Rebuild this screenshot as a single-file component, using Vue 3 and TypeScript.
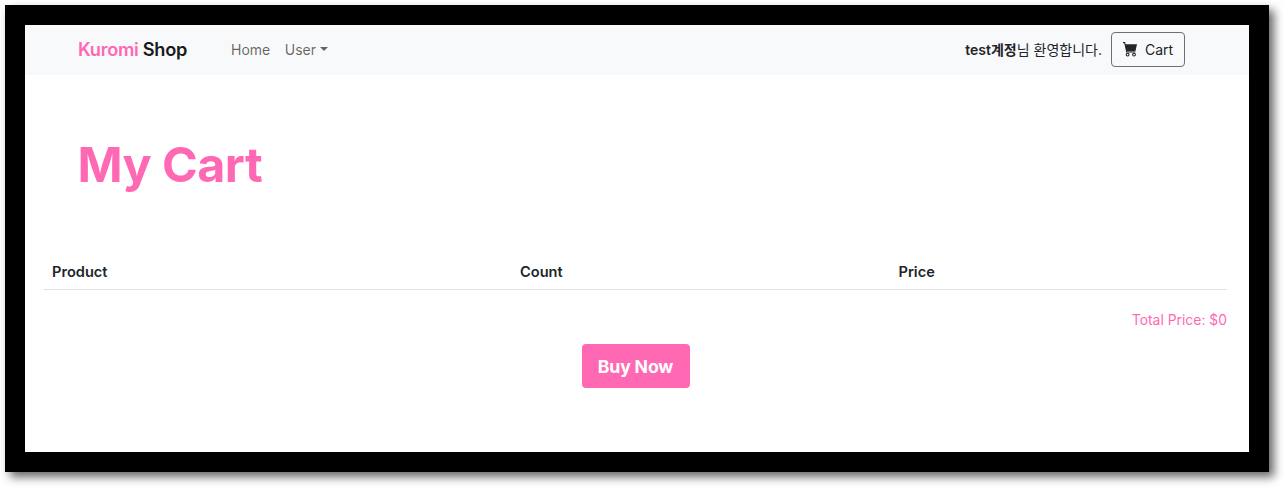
<script setup lang="ts">
const links = ['Home']
const columns = [
  { label: 'Product', width: '468px' },
  { label: 'Count', width: '378.5px' },
  { label: 'Price', width: 'auto' },
]
const total = 0
</script>

<template>
  <div class="page">
    <div class="frame">
      <nav class="navbar">
        <a class="brand"><span class="pink">Kuromi</span> Shop</a>
        <ul class="nav">
          <li v-for="link in links" :key="link"><a>{{ link }}</a></li>
          <li><a class="dropdown">User<i class="caret"></i></a></li>
        </ul>
        <div class="right">
          <span class="welcome"><b>test계정</b>님 환영합니다.</span>
          <button class="cart-btn">
            <svg class="cart-icon" viewBox="0 0 14 15" width="14" height="15">
              <path d="M0 .6h1.7l2 9.4h8.6" fill="none" stroke="currentColor" stroke-width="1.1" />
              <path d="M2.2 2.2H14l-1.6 7H3.6z" fill="currentColor" />
              <circle cx="4.6" cy="12.6" r="1.4" fill="none" stroke="currentColor" stroke-width="1.1" />
              <circle cx="11" cy="12.6" r="1.4" fill="none" stroke="currentColor" stroke-width="1.1" />
            </svg>
            Cart
          </button>
        </div>
      </nav>

      <main class="content">
        <h1 class="title">My Cart</h1>
        <table class="cart-table">
          <thead>
            <tr>
              <th v-for="col in columns" :key="col.label" :style="{ width: col.width }">{{ col.label }}</th>
            </tr>
          </thead>
        </table>
        <p class="total">Total Price: ${{ total }}</p>
        <div class="actions">
          <button class="buy-btn">Buy Now</button>
        </div>
      </main>
    </div>
  </div>
</template>

<style>
html {
  background: #fff;
}

body {
  margin: 0;
}
</style>

<style scoped>
.page {
  box-sizing: border-box;
  width: 1284px;
  height: 488px;
  padding: 5px 0 0 5px;
  overflow: hidden;
}

.frame {
  box-sizing: border-box;
  width: 1264px;
  height: 467px;
  border: 20px solid #000;
  background: #fff;
  box-shadow: 5px 5px 9px rgba(0, 0, 0, 0.6);
  font-family: Inter, "Noto Sans CJK KR", sans-serif;
  font-size: 14px;
  color: #212529;
}

.navbar {
  display: flex;
  align-items: center;
  box-sizing: border-box;
  height: 50px;
  padding: 0 64px 2px 53px;
  background: #f8f9fa;
}

.brand {
  font-size: 18.2px;
  font-weight: 600;
  letter-spacing: -0.3px;
  color: #1a1a1a;
  margin-right: 36px;
}

.pink {
  color: #ff69b4;
}

.nav {
  display: flex;
  gap: 14.5px;
  margin: 0;
  padding: 0 0 0 8px;
  list-style: none;
  color: rgba(0, 0, 0, 0.6);
}

.dropdown {
  display: flex;
  align-items: center;
}

.caret {
  width: 0;
  height: 0;
  margin-left: 4px;
  border-top: 4px solid rgba(0, 0, 0, 0.6);
  border-left: 4px solid transparent;
  border-right: 4px solid transparent;
}

.right {
  display: flex;
  align-items: center;
  gap: 9px;
  margin-left: auto;
}

.welcome {
  color: #212529;
}

.welcome b {
  font-weight: 600;
}

.cart-btn {
  display: flex;
  align-items: center;
  gap: 8px;
  box-sizing: border-box;
  width: 74px;
  height: 35px;
  padding: 0 11px;
  background: transparent;
  border: 1px solid #6c6f73;
  border-radius: 4px;
  font: inherit;
  color: #212529;
}

.cart-icon {
  flex: none;
}

.content {
  padding: 0 22px 0 19px;
}

.title {
  margin: 59px 0 0 33.5px;
  height: 62px;
  font-size: 48.4px;
  line-height: 62px;
  font-weight: 700;
  letter-spacing: -0.55px;
  color: #ff69b4;
}

.cart-table {
  width: 100%;
  margin-top: 57px;
  border-collapse: collapse;
  table-layout: fixed;
}

.cart-table th {
  box-sizing: border-box;
  height: 36px;
  padding: 2px 8px 0;
  text-align: left;
  font-size: 14.6px;
  font-weight: 600;
  color: #212529;
  border-bottom: 1px solid #dee2e6;
}

.total {
  margin: 21px 0 0;
  text-align: right;
  line-height: 18px;
  font-size: 13.9px;
  color: #ff69b4;
}

.actions {
  display: flex;
  justify-content: center;
  margin-top: 15px;
}

.buy-btn {
  width: 108px;
  height: 44px;
  padding: 2px 0 0;
  border: none;
  border-radius: 4px;
  background: #ff69b4;
  color: #fff;
  font: inherit;
  font-size: 17.7px;
  font-weight: 700;
  letter-spacing: -0.2px;
}
</style>
